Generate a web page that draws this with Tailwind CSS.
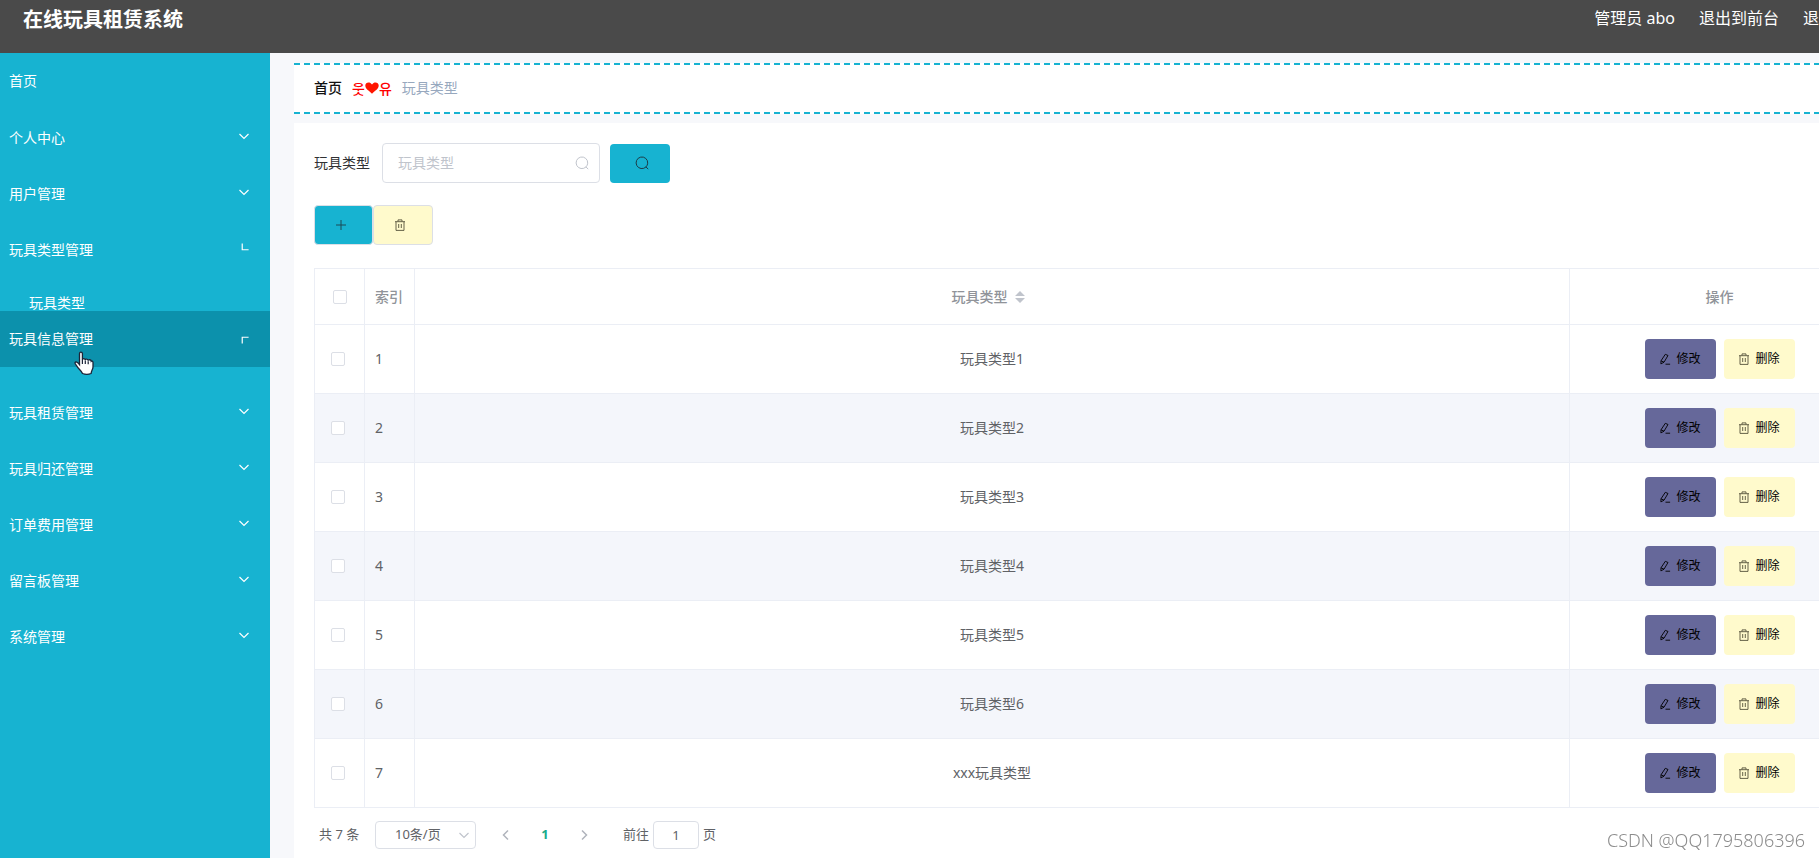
<!DOCTYPE html>
<html lang="zh-CN">
<head>
<meta charset="utf-8">
<title>在线玩具租赁系统</title>
<script src="https://cdn.jsdelivr.net/npm/@tailwindcss/browser@4"></script>
</head>
<body class="overflow-hidden bg-[#f7f8fb] font-['Noto_Sans','Noto_Sans_CJK_SC',sans-serif] text-sm text-[#606266]">
<svg class="hidden" aria-hidden="true">
  <defs>
    <symbol id="chevron" viewBox="0 0 12 12"><path d="M1.5 4 6 8.5 10.5 4" fill="none" stroke="currentColor" stroke-width="1.2"/></symbol>
    <symbol id="search" viewBox="0 0 14 14"><path d="M11 10.900A5.800 5.800 0 1 1 12.700 7.200 5.800 5.800 0 0 1 11 10.900L13.200 13.200" fill="none" stroke="currentColor" stroke-width="1"/></symbol>
    <symbol id="trash" viewBox="0 0 12 12"><path d="M1 2.7h10M2 2.7v8.7h8V2.7M4 2.5V.9h4v1.6M4.7 5v4M7.3 5v4" fill="none" stroke="currentColor" stroke-width=".9"/></symbol>
    <symbol id="edit" viewBox="0 0 12 12"><path d="M6.3 1.3 9 2.5 5 9.2 1.9 10.9 2 7.8 6.3 1.3M2 7.8l3 1.4M6.5 11.2h4.6" fill="none" stroke="currentColor" stroke-width=".9" stroke-linejoin="round"/></symbol>
  </defs>
</svg>
<div class="flex min-h-screen w-[calc(100%+71px)] flex-col">
  <header class="flex h-[53px] items-start justify-between bg-[#4a4a4a] px-[23px] text-white">
    <h1 class="pt-[6px] text-xl leading-7 font-bold">在线玩具租赁系统</h1>
    <nav class="flex gap-6 pt-1 text-base leading-7">
      <span>管理员 abo</span>
      <a href="#">退出到前台</a>
      <a href="#">退出登录</a>
    </nav>
  </header>
  <div class="flex grow">
    <aside class="relative w-[270px] shrink-0 bg-[#17b3d1] text-white">
      <nav>
        <a href="#" class="mb-px flex h-14 items-center px-[9px]">首页</a>
        <a href="#" class="flex h-14 items-center justify-between pr-5 pl-[9px]">个人中心<svg class="mb-1 size-3"><use href="#chevron"/></svg></a>
        <a href="#" class="flex h-14 items-center justify-between pr-5 pl-[9px]">用户管理<svg class="mb-1 size-3"><use href="#chevron"/></svg></a>
        <a href="#" class="flex h-14 items-center justify-between pr-5 pl-[9px]">玩具类型管理<svg class="mb-1 size-3 rotate-45"><use href="#chevron"/></svg></a>
        <div class="h-[33px] overflow-hidden"><a href="#" class="flex h-[50px] items-center pl-[29px]">玩具类型</a></div>
        <a href="#" class="mb-[18px] flex h-14 items-center justify-between bg-[#0c91ac] pr-5 pl-[9px]">玩具信息管理<svg class="size-3 rotate-135"><use href="#chevron"/></svg></a>
        <a href="#" class="flex h-14 items-center justify-between pr-5 pl-[9px]">玩具租赁管理<svg class="mb-1 size-3"><use href="#chevron"/></svg></a>
        <a href="#" class="flex h-14 items-center justify-between pr-5 pl-[9px]">玩具归还管理<svg class="mb-1 size-3"><use href="#chevron"/></svg></a>
        <a href="#" class="flex h-14 items-center justify-between pr-5 pl-[9px]">订单费用管理<svg class="mb-1 size-3"><use href="#chevron"/></svg></a>
        <a href="#" class="flex h-14 items-center justify-between pr-5 pl-[9px]">留言板管理<svg class="mb-1 size-3"><use href="#chevron"/></svg></a>
        <a href="#" class="flex h-14 items-center justify-between pr-5 pl-[9px]">系统管理<svg class="mb-1 size-3"><use href="#chevron"/></svg></a>
      </nav>
      <!-- hand pointer over the hovered menu entry -->
      <svg class="absolute top-[298px] left-[74px] h-6 w-5" viewBox="0 0 20 24"><path d="M5.5 2.6C5.5.6 8.3.6 8.4 2.6V9c0-2 2.7-1.8 2.9.2 0-1.6 2.7-1.5 2.9.5 0-1.3 2.8-1.4 3 .6.9-.8 1.8 0 1.8 1.2V16c0 2.5-1.7 3.5-1.9 6.5-2 .8-6.500.8-8.600 0C7.500 19.500 4 17.500 2.800 15 2 13.500.8 12.700 1 11.700c.5-1.300 2.500-1 4.500 1.800z" fill="#fff" stroke="#1c2438" stroke-width="1.300"/><path d="M8.400 9v4M11.300 9.500v3.500M14.200 10.200v3" stroke="#1c2438" stroke-width="1.200"/></svg>
    </aside>
    <main class="flex min-w-0 grow flex-col pt-[10px] pl-6">
      <div class="flex h-[51px] items-center border-y-2 border-dashed border-[#17b3d1] bg-white pb-[2px] pl-5">
        <a href="#" class="font-medium text-[#111]">首页</a>
        <span class="mx-[10px] flex items-center font-['Noto_Sans_CJK_KR',sans-serif] font-medium text-[#f00]">웃<svg class="h-3 w-[14px]" viewBox="0 0 14 12"><path d="M7 11.800C4.500 9 .3 7.300.3 3.600.3.200 5-.8 7 2.600 9-.8 13.700.200 13.700 3.600 13.700 7.300 9.500 9 7 11.800z" fill="#ff1500"/></svg>유</span>
        <span class="text-[#97a8be]">玩具类型</span>
      </div>
      <section class="mt-[9px] grow bg-white px-5 pt-5">
        <form class="flex items-center">
          <label for="type" class="mr-3 text-[#303133]">玩具类型</label>
          <div class="flex h-10 w-[218px] items-center rounded border border-[#dcdfe6] pr-[10px] pl-[15px]">
            <input id="type" type="text" placeholder="玩具类型" class="min-w-0 grow outline-none placeholder:text-[#c0c4cc]">
            <svg class="size-[14px] shrink-0 text-[#c0c4cc]"><use href="#search"/></svg>
          </div>
          <button type="button" aria-label="查询" class="ml-[10px] flex h-[39px] w-[60px] items-center justify-center rounded-sm bg-[#17b3d1] pl-1 text-[#1c3b46]"><svg class="size-[14px]"><use href="#search"/></svg></button>
        </form>
        <div class="mt-[22px] flex">
          <button type="button" aria-label="新增" class="flex h-10 w-[59px] items-center justify-center rounded border border-[#dcdfe6] bg-[#17b3d1] pr-[6px] text-[#1c4b57]"><svg class="size-3" viewBox="0 0 12 12"><path d="M1 6h10M6 1v10" stroke="currentColor"/></svg></button>
          <button type="button" aria-label="批量删除" class="flex h-10 w-[60px] items-center justify-center rounded border border-[#dcdfe6] bg-[#fffacc] pr-[6px] text-[#55513a]"><svg class="size-3"><use href="#trash"/></svg></button>
        </div>
        <table class="mt-[23px] w-full table-fixed border-collapse border border-[#ebeef5]">
          <colgroup><col class="w-[50px]"><col class="w-[50px]"><col><col class="w-[300px]"></colgroup>
          <thead>
            <tr class="h-14 text-[#909399]">
              <th class="border border-[#ebeef5]"><input type="checkbox" aria-label="全选" class="mx-auto block size-[14px] appearance-none rounded-xs border border-[#dcdfe6] bg-white"></th>
              <th class="border border-[#ebeef5] pl-[10px] text-left font-medium">索引</th>
              <th class="border border-[#ebeef5] pr-2 font-medium"><span class="inline-flex items-center gap-[7px]">玩具类型<svg class="h-3 w-[10px]" viewBox="0 0 10 12"><path d="M0 5 5 0l5 5zM0 7h10l-5 5z" fill="#c0c4cc"/></svg></span></th>
              <th class="border border-[#ebeef5] font-medium">操作</th>
            </tr>
          </thead>
          <tbody id="rows"></tbody>
        </table>
        <div class="mt-3 flex h-[29px] items-center pl-[5px] text-[13px]">
          <span class="w-14">共 7 条</span>
          <div class="relative">
            <select aria-label="每页条数" class="h-7 w-[101px] appearance-none rounded-sm border border-[#dcdfe6] bg-white pl-[19px] text-[13px] outline-none"><option>10条/页</option></select>
            <svg class="pointer-events-none absolute top-2 right-[6px] size-3 text-[#c0c4cc]"><use href="#chevron"/></svg>
          </div>
          <button type="button" aria-label="上一页" class="ml-[23px] flex w-[14px] justify-center text-[#b0b4bc]"><svg class="size-3 rotate-90" viewBox="0 0 12 12"><path d="M1.500 4 6 8.500 10.500 4" fill="none" stroke="currentColor" stroke-width="1.500"/></svg></button>
          <button type="button" class="mx-4 w-8 text-center font-bold text-[#1aab8a]">1</button>
          <button type="button" aria-label="下一页" class="flex w-[14px] justify-center text-[#b0b4bc]"><svg class="size-3 -rotate-90" viewBox="0 0 12 12"><path d="M1.500 4 6 8.500 10.500 4" fill="none" stroke="currentColor" stroke-width="1.500"/></svg></button>
          <label for="page" class="ml-8">前往</label>
          <input id="page" type="text" value="1" class="mx-1 h-7 w-[46px] rounded-sm border border-[#dcdfe6] text-center outline-none">
          <span>页</span>
        </div>
      </section>
    </main>
  </div>
</div>
<div class="fixed right-[14px] bottom-1 text-lg font-light text-[#8c8c8c]">CSDN @QQ1795806396</div>
<template id="row">
  <tr class="h-[69px] even:bg-[#f4f6fb]">
    <td class="border border-[#ebeef5] pl-4"><input type="checkbox" aria-label="选择" class="block size-[14px] appearance-none rounded-xs border border-[#dcdfe6] bg-white"></td>
    <td class="border border-[#ebeef5] pl-[10px]"></td>
    <td class="border border-[#ebeef5] text-center"></td>
    <td class="border border-[#ebeef5]">
      <div class="flex justify-center gap-2 text-xs text-black">
        <button type="button" class="flex h-10 w-[71px] items-center justify-center gap-[5px] rounded bg-[#66689a]"><svg class="size-3"><use href="#edit"/></svg>修改</button>
        <button type="button" class="flex h-10 w-[71px] items-center justify-center gap-[5px] rounded bg-[#fffacc]"><svg class="size-3 text-[#55513a]"><use href="#trash"/></svg>删除</button>
      </div>
    </td>
  </tr>
</template>
<script>
  const names = ['玩具类型1', '玩具类型2', '玩具类型3', '玩具类型4', '玩具类型5', '玩具类型6', 'xxx玩具类型'];
  const body = document.getElementById('rows');
  names.forEach((name, i) => {
    const row = document.getElementById('row').content.cloneNode(true);
    const cells = row.querySelectorAll('td');
    cells[1].textContent = i + 1;
    cells[2].textContent = name;
    body.appendChild(row);
  });
</script>
</body>
</html>
